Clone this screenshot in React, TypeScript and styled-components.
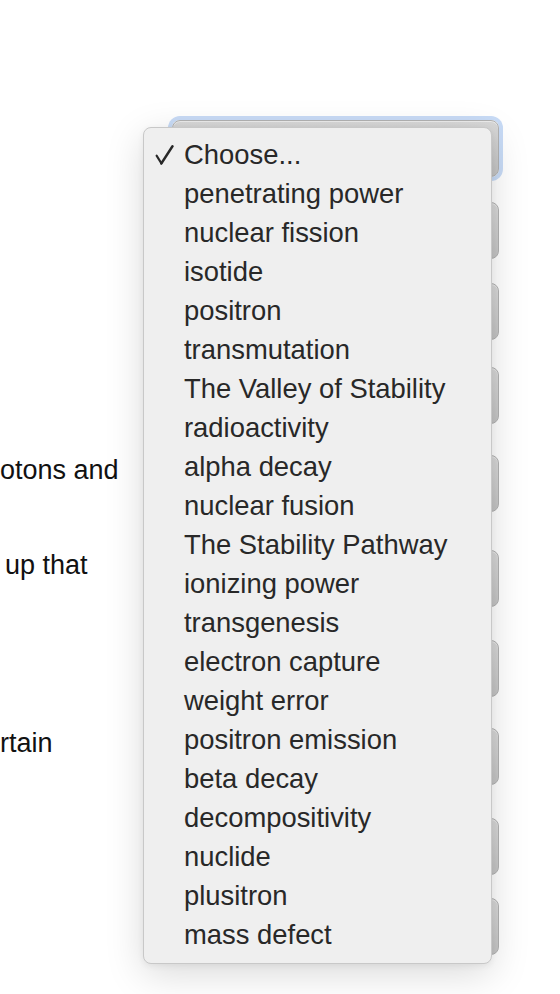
import React from "react";
import styled, { createGlobalStyle } from "styled-components";

const Global = createGlobalStyle`
  html, body { margin: 0; padding: 0; background: #ffffff; }
  body { font-family: "Liberation Sans", Arial, Helvetica, sans-serif; }
`;

const Page = styled.div`
  position: relative;
  width: 560px;
  height: 994px;
  overflow: hidden;
  background: #ffffff;
`;

const Form = styled.div`
  display: flex;
  flex-direction: column;
  padding-top: 120px;
`;

const Row = styled.div<{ $after: number }>`
  display: flex;
  align-items: center;
  height: 57px;
  margin-bottom: ${(p) => p.$after}px;
`;

const Question = styled.div<{ $indent: number }>`
  flex: none;
  width: 172px;
  box-sizing: border-box;
  padding-left: ${(p) => p.$indent}px;
  font-size: 27px;
  line-height: 28px;
  color: #111111;
  white-space: pre;
  overflow: hidden;
`;

const SelectBox = styled.div<{ $focused?: boolean }>`
  flex: none;
  width: 327px;
  height: 57px;
  box-sizing: border-box;
  border-radius: 8px;
  border: 1px solid #b2b2b2;
  background: linear-gradient(#d9d9d9, #c4c4c4);
  box-shadow: ${(p) =>
    p.$focused
      ? "0 0 0 4px #c8dbf6, inset 0 1px 0 rgba(255,255,255,0.5)"
      : "inset 0 1px 0 rgba(255,255,255,0.5)"};
`;

const Menu = styled.div`
  position: absolute;
  left: 143px;
  top: 127px;
  width: 349px;
  box-sizing: border-box;
  padding: 7px 0 9px;
  background: #efefef;
  border: 1px solid #c8c8c8;
  border-radius: 8px;
  box-shadow: 0 10px 38px rgba(0, 0, 0, 0.15), 0 2px 6px rgba(0, 0, 0, 0.06);
`;

const Item = styled.div`
  display: flex;
  align-items: center;
  height: 39px;
  font-size: 27.4px;
  line-height: 39px;
  color: #282828;
  white-space: nowrap;
`;

const CheckSlot = styled.span`
  flex: none;
  display: flex;
  align-items: center;
  width: 29px;
  padding-left: 11px;
`;

const rows: { after: number; text: string; indent: number; focused?: boolean }[] = [
  { after: 25, text: "", indent: 0, focused: true },
  { after: 24, text: "", indent: 0 },
  { after: 27, text: "", indent: 0 },
  { after: 31, text: "", indent: 0 },
  { after: 38, text: "otons and", indent: 0 },
  { after: 33, text: "up that", indent: 5 },
  { after: 31, text: "", indent: 0 },
  { after: 33, text: "rtain", indent: 0 },
  { after: 23, text: "", indent: 0 },
  { after: 0, text: "", indent: 0 },
];

const options = [
  "Choose...",
  "penetrating power",
  "nuclear fission",
  "isotide",
  "positron",
  "transmutation",
  "The Valley of Stability",
  "radioactivity",
  "alpha decay",
  "nuclear fusion",
  "The Stability Pathway",
  "ionizing power",
  "transgenesis",
  "electron capture",
  "weight error",
  "positron emission",
  "beta decay",
  "decompositivity",
  "nuclide",
  "plusitron",
  "mass defect",
];

const CheckMark = () => (
  <svg width="19" height="20" viewBox="0 0 19 20">
    <path d="M1.6 10.6 L6.4 18.4" stroke="#282828" strokeWidth="2.1" strokeLinecap="round" fill="none" />
    <path d="M6.4 18.4 L17.4 1.4" stroke="#282828" strokeWidth="2.6" strokeLinecap="round" fill="none" />
  </svg>
);

export default function App() {
  return (
    <Page>
      <Global />
      <Form>
        {rows.map((r, i) => (
          <Row key={i} $after={r.after}>
            <Question $indent={r.indent}>{(r.text || "\u00a0") + "\n\u00a0"}</Question>
            <SelectBox $focused={r.focused} />
          </Row>
        ))}
      </Form>
      <Menu>
        {options.map((o, i) => (
          <Item key={o}>
            <CheckSlot>{i === 0 ? <CheckMark /> : null}</CheckSlot>
            {o}
          </Item>
        ))}
      </Menu>
    </Page>
  );
}
